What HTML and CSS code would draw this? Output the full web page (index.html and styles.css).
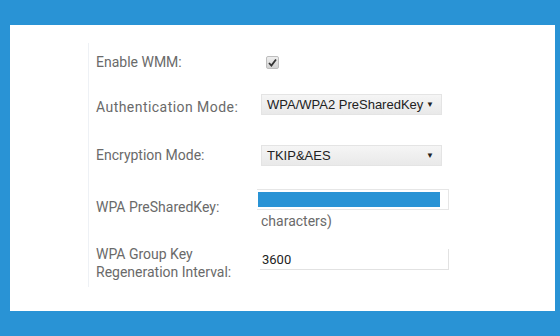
FILE: index.html
```html
<!DOCTYPE html>
<html>
<head>
<meta charset="utf-8">
<link rel="stylesheet" href="styles.css">
</head>
<body>
<div class="panel">
  <div class="form">
    <div class="row r1">
      <div class="label">Enable WMM:</div>
      <div class="ctrl"><span class="check"><svg width="9" height="9" viewBox="0 0 9 9"><path d="M1 5 L3.4 7.5 L8 1.5" fill="none" stroke="#333" stroke-width="1.8"/></svg></span></div>
    </div>
    <div class="row r2">
      <div class="label wide">Authentication Mode:</div>
      <div class="ctrl"><div class="sel"><span>WPA/WPA2 PreSharedKey</span><span class="arr">▼</span></div></div>
    </div>
    <div class="row r3">
      <div class="label">Encryption Mode:</div>
      <div class="ctrl"><div class="sel"><span>TKIP&amp;AES</span><span class="arr">▼</span></div></div>
    </div>
    <div class="row r4">
      <div class="label">WPA PreSharedKey:</div>
      <div class="ctrl col">
        <div class="pwd"><div class="mask"></div></div>
        <div class="note">characters)</div>
      </div>
    </div>
    <div class="row r5">
      <div class="label two">WPA Group Key<br>Regeneration Interval:</div>
      <div class="ctrl"><div class="txt">3600</div></div>
    </div>
  </div>
</div>
</body>
</html>
```
FILE: styles.css
```css
html, body { margin: 0; padding: 0; }
body {
  width: 560px; height: 336px;
  background: #2993d5;
  font-family: Roboto, "Liberation Sans", sans-serif;
  overflow: hidden;
}
.panel {
  position: relative;
  margin: 25px 0 0 10px;
  width: 545px; height: 286px;
  background: #fff;
  box-sizing: border-box;
  padding: 18px 0 0 78px;
}
.form {
  border-left: 1px solid #eef1f5;
  width: 400px;
  height: 244px;
  padding-left: 7px;
}
.row { display: flex; align-items: center; }
.r1 { height: 38px; }
.r2 { height: 47px; }
.r3 { height: 54px; }
.r4 { height: 50px; }
.r5 { height: 55px; }
.label {
  width: 165px;
  flex: none;
  font-size: 14px;
  line-height: 19px;
  color: #6a6a6a;
}
.wide { letter-spacing: 0.45px; padding-top: 5px; }
.two { line-height: 18px; padding-top: 6px; }
.ctrl { display: flex; align-items: center; }
.check {
  display: flex; align-items: center; justify-content: center;
  width: 11px; height: 11px;
  margin-left: 5px;
  border: 1px solid #bdbdbd;
  border-radius: 2px;
  background: linear-gradient(#eeeeee, #d2d2d2);
}
.sel {
  width: 181px; height: 21px;
  box-sizing: border-box;
  display: flex; justify-content: space-between; align-items: center;
  padding: 0 7px 0 5px;
  background: linear-gradient(#f5f5f5, #e9e9e9);
  border: 1px solid #e4e4e4;
  font-family: "Liberation Sans", Arial, sans-serif;
  font-size: 13px;
  color: #222;
}
.arr { font-size: 8px; color: #222; }
.col { flex-direction: column; align-items: flex-start; margin-left: -4px; padding-top: 5px; }
.pwd {
  width: 192px; height: 21px;
  box-sizing: border-box;
  border: 1px solid #e6e6e6;
  border-left: none;
  padding: 2px 0 0 1px;
}
.mask { width: 182px; height: 15px; background: #2993d5; }
.note {
  margin-top: 2px;
  margin-left: 4px;
  font-size: 14px;
  line-height: 19px;
  color: #6a6a6a;
}
.txt {
  width: 189px; height: 21px;
  box-sizing: border-box;
  border-right: 1px solid #e2e2e2;
  border-bottom: 1px solid #e2e2e2;
  padding-left: 2px;
  font-size: 13px;
  line-height: 21px;
  color: #222;
  margin-left: -1px;
  margin-top: -1px;
}
```
